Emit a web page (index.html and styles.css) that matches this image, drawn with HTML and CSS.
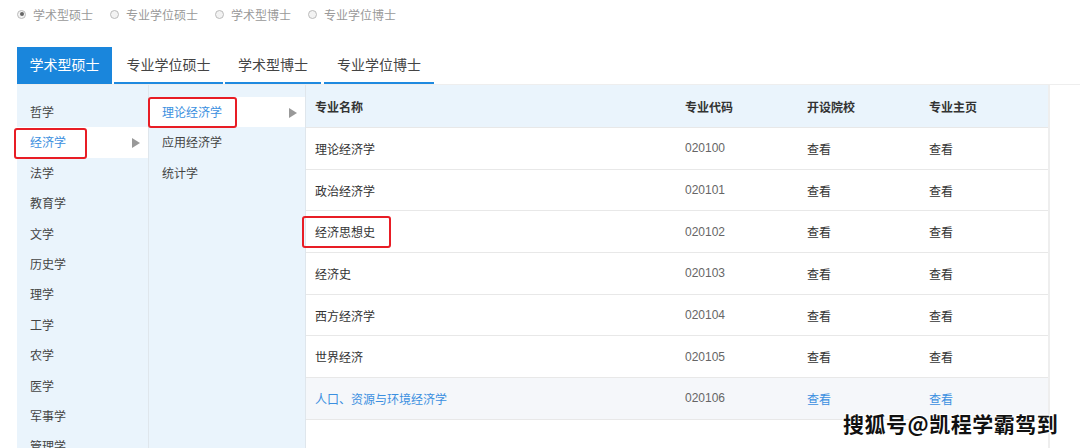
FILE: index.html
```html
<!DOCTYPE html>
<html lang="zh-CN">
<head>
<meta charset="utf-8">
<title>专业目录</title>
<link rel="stylesheet" href="styles.css">
</head>
<body>
<div class="page">
  <div class="radios">
    <label class="radio"><span class="dot checked"></span>学术型硕士</label>
    <label class="radio"><span class="dot"></span>专业学位硕士</label>
    <label class="radio"><span class="dot"></span>学术型博士</label>
    <label class="radio"><span class="dot"></span>专业学位博士</label>
  </div>
  <div class="tabs">
    <div class="tab active">学术型硕士</div>
    <div class="tab t2">专业学位硕士</div>
    <div class="tab t3">学术型博士</div>
    <div class="tab t4">专业学位博士</div>
  </div>
  <div class="panel">
    <ul class="col col1">
      <li>哲学</li>
      <li class="sel">经济学<span class="arrow"></span><span class="mark m1"></span></li>
      <li>法学</li>
      <li>教育学</li>
      <li>文学</li>
      <li>历史学</li>
      <li>理学</li>
      <li>工学</li>
      <li>农学</li>
      <li>医学</li>
      <li>军事学</li>
      <li>管理学</li>
    </ul>
    <ul class="col col2">
      <li class="sel">理论经济学<span class="arrow"></span><span class="mark m2"></span></li>
      <li>应用经济学</li>
      <li>统计学</li>
    </ul>
    <div class="table">
      <div class="row head">
        <div class="c name">专业名称</div>
        <div class="c code">专业代码</div>
        <div class="c school">开设院校</div>
        <div class="c home">专业主页</div>
      </div>
      <div class="row">
        <div class="c name">理论经济学</div>
        <div class="c code">020100</div>
        <div class="c school">查看</div>
        <div class="c home">查看</div>
      </div>
      <div class="row">
        <div class="c name">政治经济学</div>
        <div class="c code">020101</div>
        <div class="c school">查看</div>
        <div class="c home">查看</div>
      </div>
      <div class="row">
        <div class="c name">经济思想史<span class="mark m3"></span></div>
        <div class="c code">020102</div>
        <div class="c school">查看</div>
        <div class="c home">查看</div>
      </div>
      <div class="row">
        <div class="c name">经济史</div>
        <div class="c code">020103</div>
        <div class="c school">查看</div>
        <div class="c home">查看</div>
      </div>
      <div class="row">
        <div class="c name">西方经济学</div>
        <div class="c code">020104</div>
        <div class="c school">查看</div>
        <div class="c home">查看</div>
      </div>
      <div class="row">
        <div class="c name">世界经济</div>
        <div class="c code">020105</div>
        <div class="c school">查看</div>
        <div class="c home">查看</div>
      </div>
      <div class="row hover">
        <div class="c name">人口、资源与环境经济学</div>
        <div class="c code">020106</div>
        <div class="c school">查看</div>
        <div class="c home">查看</div>
      </div>
    </div>
  </div>
  <div class="watermark">搜狐号@凯程学霸驾到</div>
</div>
</body>
</html>
```

FILE: styles.css
```css
* { box-sizing: border-box; }
html, body {
  margin: 0;
  padding: 0;
  background: #fff;
  overflow: hidden;
}
body {
  font-family: "Noto Sans CJK SC", "Microsoft YaHei", "Liberation Sans", sans-serif;
  font-size: 12px;
  color: #333;
  width: 1080px;
  height: 448px;
}
.page {
  position: relative;
  width: 1080px;
  height: 448px;
  padding-left: 17px;
}
.radios {
  display: flex;
  height: 28px;
  align-items: center;
  padding-left: 0;
  color: #999;
  font-size: 12px;
}
.radio {
  display: flex;
  align-items: center;
  margin-right: 17px;
}
.radio .dot {
  width: 9px;
  height: 9px;
  border-radius: 50%;
  border: 1px solid #bbb;
  background: #f3f3f3;
  margin-right: 7px;
  position: relative;
}
.radio .dot.checked::after {
  content: "";
  position: absolute;
  left: 1.5px;
  top: 1.5px;
  width: 4px;
  height: 4px;
  border-radius: 50%;
  background: #666;
}
.tabs {
  display: flex;
  margin-top: 19px;
  height: 37px;
  gap: 2px;
}
.tab {
  height: 37px;
  line-height: 35px;
  font-size: 14px;
  color: #444;
  text-align: center;
  border-bottom: 2px solid #1f8ae0;
}
.tab.active {
  width: 95px;
  background: #1a86dc;
  color: #fff;
  border-bottom-color: #1a86dc;
}
.tab.t2 { width: 109px; }
.tab.t3 { width: 96px; }
.tab.t4 { width: 110px; margin-left: 1px; }
.panel {
  display: flex;
  height: 400px;
  border-top: 1px solid #eee;
}
.col {
  list-style: none;
  margin: 0;
  padding: 12px 0 0;
  background: #eaf4fc;
  border-right: 1px solid #dfe6ec;
}
.col1 { width: 132px; }
.col2 { width: 157px; }
.col li {
  position: relative;
  height: 30.4px;
  line-height: 30.4px;
  padding-left: 13px;
  color: #444;
  white-space: nowrap;
}
.col li.sel {
  background: #fff;
  color: #3b8fe0;
}
.arrow {
  position: absolute;
  right: 8px;
  top: 11px;
  width: 0;
  height: 0;
  border-top: 5px solid transparent;
  border-bottom: 5px solid transparent;
  border-left: 8px solid #999;
}
.mark {
  position: absolute;
  border: 2px solid #e81d25;
  border-radius: 3px;
}
.m1 { left: -3px; top: 1px; width: 73px; height: 31px; }
.m2 { left: -1px; top: 0; width: 89px; height: 31px; }
.m3 { left: -4px; top: 5px; width: 89px; height: 32px; }
.table {
  width: 744px;
  border-right: 2px solid #eee;
}
.row {
  display: flex;
  height: 41.7px;
  align-items: center;
  border-bottom: 1px solid #e8e8e8;
  background: #fff;
}
.row.head {
  height: 43px;
  background: #eaf4fc;
  font-weight: bold;
  color: #333;
}
.c { padding-left: 9px; position: relative; height: 100%; display: flex; align-items: center; }
.name { width: 370px; }
.code { width: 122px; color: #666; font-family: "Liberation Sans", "Noto Sans CJK SC", sans-serif; }
.head .code { font-family: "Noto Sans CJK SC", sans-serif; color: #333; }
.school { width: 122px; }
.home { flex: 1; }
.row.hover { background: #f5f7fa; }
.row.hover .name, .row.hover .school, .row.hover .home { color: #3b8fe0; }
.watermark {
  position: absolute;
  left: 843px;
  top: 408px;
  font-size: 21px;
  font-weight: bold;
  color: #111;
  letter-spacing: 0.5px;
  text-shadow: -1px -1px 0 #fff, 1px 1px 0 #fff, 1px -1px 0 #fff, -1px 1px 0 #fff;
  white-space: nowrap;
}
```
